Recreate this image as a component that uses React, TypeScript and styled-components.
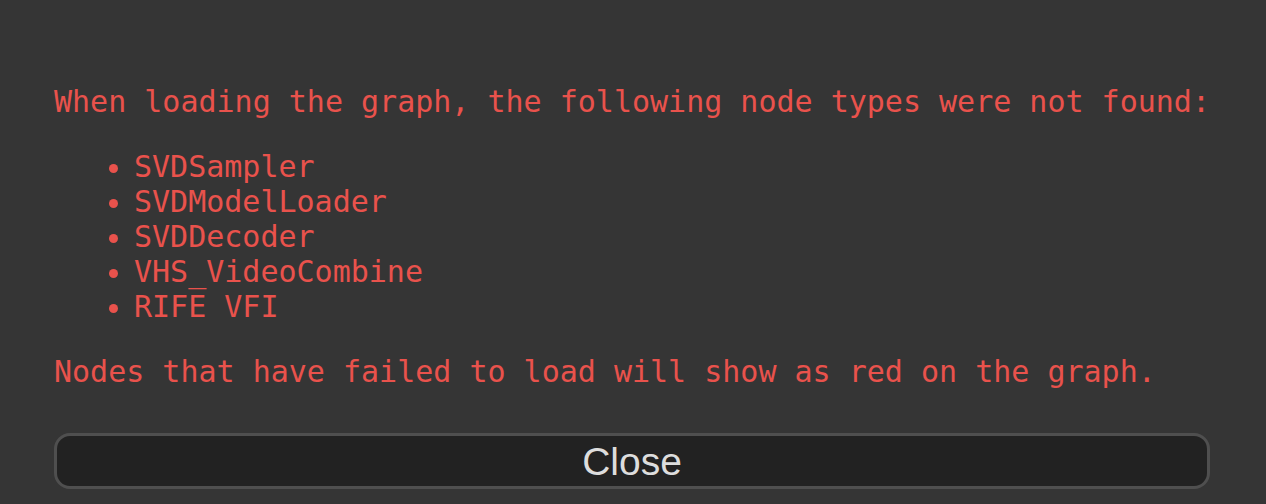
import React from "react";
import styled, { createGlobalStyle } from "styled-components";

const Global = createGlobalStyle`
  html, body { margin: 0; padding: 0; background: #353535; }
  body { width: 1266px; height: 504px; overflow: hidden; }
`;

const Dialog = styled.div`
  box-sizing: border-box;
  width: 1266px;
  height: 504px;
  padding: 54px 56px 0 54px;
  background: #353535;
  display: flex;
  flex-direction: column;
`;

const Message = styled.div`
  font-family: "DejaVu Sans Mono", monospace;
  font-size: 30px;
  line-height: normal;
  color: #e9524c;
  white-space: pre;
`;

const Para = styled.p`
  margin: 30px 0;
`;

const List = styled.ul`
  margin: 30px 0;
  padding-left: 80px;
`;

const Item = styled.li``;

const CloseButton = styled.button`
  box-sizing: border-box;
  margin-top: 14px;
  width: 100%;
  height: 56px;
  background: #222222;
  border: 3px solid #4f4f4f;
  border-radius: 16px;
  color: #dddddd;
  font-family: "Liberation Sans", Arial, sans-serif;
  font-size: 39px;
  line-height: 1;
  padding: 0;
  cursor: pointer;
`;

const missing = [
  "SVDSampler",
  "SVDModelLoader",
  "SVDDecoder",
  "VHS_VideoCombine",
  "RIFE VFI",
];

export default function App() {
  return (
    <>
      <Global />
      <Dialog>
        <Message>
          <Para>When loading the graph, the following node types were not found:</Para>
          <List>
            {missing.map((m) => (
              <Item key={m}>{m}</Item>
            ))}
          </List>
          <Para>Nodes that have failed to load will show as red on the graph.</Para>
        </Message>
        <CloseButton>Close</CloseButton>
      </Dialog>
    </>
  );
}
